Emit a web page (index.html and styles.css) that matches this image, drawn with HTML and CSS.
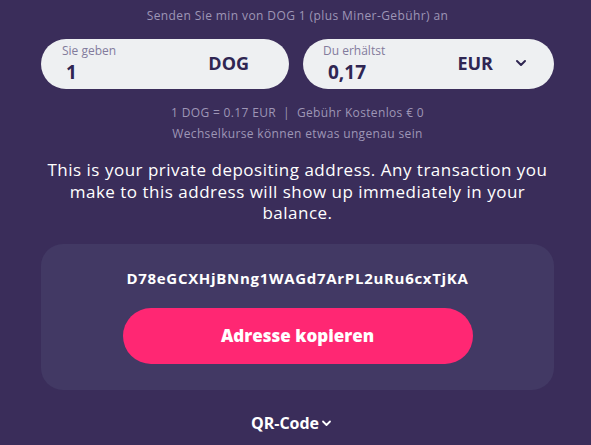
FILE: index.html
```html
<!DOCTYPE html>
<html lang="de">
<head>
<meta charset="utf-8">
<link rel="stylesheet" href="styles.css">
</head>
<body>
<main class="page">
  <p class="hint">Senden Sie min von DOG 1 (plus Miner-Gebühr) an</p>
  <div class="pills">
    <div class="pill">
      <div class="field">
        <span class="label">Sie geben</span>
        <span class="value value-give">1</span>
      </div>
      <span class="cur">DOG</span>
    </div>
    <div class="pill pill-right">
      <div class="field">
        <span class="label">Du erhältst</span>
        <span class="value">0,17</span>
      </div>
      <span class="cur">EUR</span>
      <svg class="chev" width="12" height="8" viewBox="0 0 12 8"><path d="M2 2l4 4 4-4" fill="none" stroke="#2f2652" stroke-width="2" stroke-linecap="round" stroke-linejoin="round"/></svg>
    </div>
  </div>
  <p class="rate">1 DOG = 0.17 EUR &nbsp;|&nbsp; Gebühr Kostenlos € 0</p>
  <p class="rate rate2">Wechselkurse können etwas ungenau sein</p>
  <p class="intro">This is your private depositing address. Any transaction you make to this address will show up immediately in your balance.</p>
  <section class="card">
    <p class="addr">D78eGCXHjBNng1WAGd7ArPL2uRu6cxTjKA</p>
    <button class="copy">Adresse kopieren</button>
  </section>
  <div class="qr">QR-Code<svg width="11" height="8" viewBox="0 0 11 8"><path d="M2 2.5l3.5 3.5 3.5-3.5" fill="none" stroke="#fff" stroke-width="1.8" stroke-linecap="round" stroke-linejoin="round"/></svg></div>
</main>
</body>
</html>
```
FILE: styles.css
```css
html, body {
  margin: 0;
  padding: 0;
  background: #3a2d5a;
}
body {
  font-family: "Open Sans", "Noto Sans", sans-serif;
  color: #fff;
  width: 591px;
  height: 445px;
  overflow: hidden;
}
.page {
  padding: 0 37px 0 41px;
  display: flex;
  flex-direction: column;
}
p { margin: 0; }
.hint {
  text-align: center;
  font-size: 12px;
  letter-spacing: 0.4px;
  color: #9e96b6;
  line-height: 16px;
  padding-top: 8px;
}
.pills {
  display: flex;
  gap: 14px;
  margin-top: 15px;
}
.pill {
  flex: 0 0 248px;
  height: 50px;
  box-sizing: border-box;
  background: #eef0f2;
  border-radius: 25px;
  display: flex;
  align-items: center;
  padding: 0 40px 0 21px;
  color: #2f2652;
}
.pill-right {
  flex: 0 0 251px;
  padding: 0 27px 0 20px;
}
.field {
  flex: 1;
  display: flex;
  flex-direction: column;
}
.label {
  font-size: 12px;
  color: #827b9c;
  line-height: 16px;
}
.value {
  font-size: 19px;
  font-weight: 700;
  line-height: 26px;
  padding-left: 5px;
}
.value-give { padding-left: 4px; }
.cur {
  font-size: 18px;
  font-weight: 700;
  margin-top: -2px;
}
.chev { margin-left: 22px; margin-top: -2px; }
.rate {
  text-align: center;
  font-size: 12px;
  letter-spacing: 0.35px;
  color: #9e96b6;
  line-height: 21px;
  margin-top: 13px;
}
.rate2 { margin-top: 0; }
.intro {
  text-align: center;
  font-size: 17px;
  letter-spacing: 0.5px;
  line-height: 21.5px;
  margin-top: 15px;
  padding: 0 4px;
}
.card {
  margin-top: 20px;
  background: #423964;
  border-radius: 22px;
  padding: 25px 82px 26px;
  display: flex;
  flex-direction: column;
  align-items: center;
  width: 513px;
  box-sizing: border-box;
}
.addr {
  font-size: 15px;
  font-weight: 700;
  letter-spacing: 0.7px;
  line-height: 18px;
}
.copy {
  margin-top: 21px;
  width: 350px;
  height: 56px;
  border: 0;
  border-radius: 28px;
  background: #ff2773;
  color: #fff;
  font-family: inherit;
  font-size: 17px;
  font-weight: 800;
}
.qr {
  margin-top: 22px;
  align-self: center;
  margin-right: 12px;
  font-size: 16px;
  font-weight: 700;
  display: flex;
  align-items: center;
  gap: 2px;
}
```
